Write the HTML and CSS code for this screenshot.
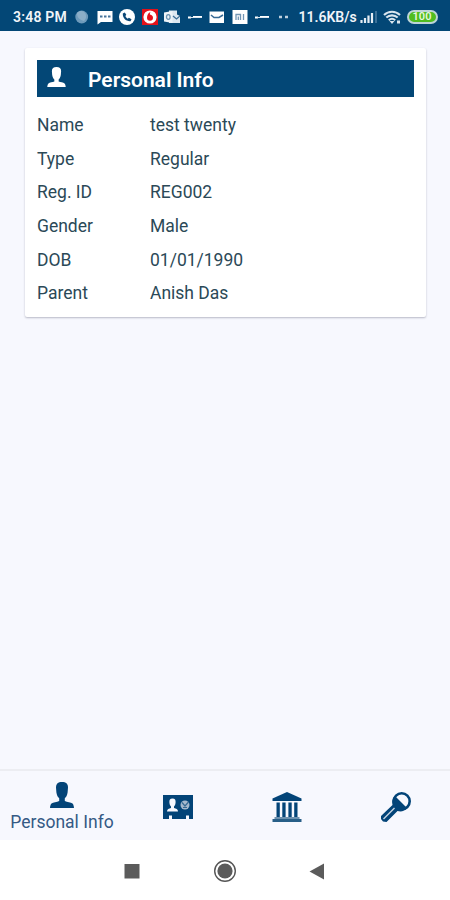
FILE: index.html
```html
<!DOCTYPE html>
<html lang="en">
<head>
  <meta charset="UTF-8">
  <title>Personal Info</title>
  <meta name="viewport" content="width=device-width, initial-scale=1.0">
  <link rel="stylesheet" href="styles.css">
</head>
<body>
  <svg width="0" height="0" class="defs">
    <symbol id="person" viewBox="0 0 24 26">
      <path d="M12 0C8 0 6 1.800 6 5.500l.4 5c.5 3.200 1.500 4.700 2.800 5.700v2.800C7 20.200 3 20 1.500 21.500.5 22.500.2 24 0 26h24c-.2-2-.5-3.500-1.500-4.500C21 20 17 20.200 14.800 19v-2.800c1.300-1 2.300-2.500 2.800-5.700l.4-5C18 1.800 16 0 12 0z"/>
    </symbol>
  </svg>

  <div class="status">
    <span class="time">3:48 PM</span>
    <div class="notifications">
      <svg viewBox="0 0 16 16"><circle cx="7.700" cy="8" r="6.400" fill="#6d9abb"/><path d="M3 4c3-3 7-2 8 0 2 3 1 6-1 8-4-1-7-3-7-8z" fill="#8baec8"/></svg>
      <svg viewBox="0 0 16 16"><path d="M.5 2h15v11H4L.5 15.500z" fill="#fff"/><path d="M3 7.500h2.500M7 7.500h2.500M11 7.500h2.500" stroke="#46749b" stroke-width="2"/></svg>
      <svg viewBox="0 0 16 16"><circle cx="8" cy="8" r="8" fill="#fff"/><path d="M5.800 3.500 3.800 4.500C3.500 9 7 12.500 11.500 12.200l1-2-2.600-1.500-1.200 1C7.500 9 6.800 8 6.400 7l.9-1.200z" fill="#0b4776"/></svg>
      <svg viewBox="0 0 16 16"><path d="M0 0h16v16H0z" fill="#e3121b"/><circle cx="8" cy="8" r="6.600" fill="#fff"/><path d="M9.500 2.500C8 3.200 7.800 4 7.900 5.500 10 5.800 11 7.200 11 8.700a3 3 0 0 1-6 0C5 6 6.500 3.200 9.500 2.500z" fill="#e3121b"/></svg>
      <svg viewBox="0 0 16 16"><path d="M5 1.500h8v4l3 1.500v7H5z" fill="#dce7f0"/><path d="M0 3.500l8.500-1.500v12L0 12.500z" fill="#eef4f8"/><path d="M9 7l3.500 3L16 7" fill="none" stroke="#3d7098" stroke-width="1.300"/><ellipse cx="4.300" cy="8" rx="1.800" ry="2.400" fill="none" stroke="#6b93b2" stroke-width="1.300"/></svg>
      <svg viewBox="0 0 16 16"><path d="M1 8.500h3M6 8h9" stroke="#fff" stroke-width="2"/><path d="M3 8.500h12" stroke="#dce7f0"/></svg>
      <svg viewBox="0 0 16 16"><path d="M.5 2.500h14.500v11.500H.5z" fill="#fff"/><path d="M2 6l3 2.500h5L14 6" fill="none" stroke="#376b96" stroke-width="1.500"/></svg>
      <svg viewBox="0 0 16 16"><path d="M.5 1h15v14H.5z" fill="#fff"/><path d="M4 11V5.500h4.500V11M6.300 7.500V11M11.500 5v6" fill="none" stroke="#7295b4" stroke-width="1.300"/></svg>
      <svg viewBox="0 0 16 16"><path d="M1 8.500h3M6 8h9" stroke="#fff" stroke-width="2"/><path d="M3 8.500h12" stroke="#dce7f0"/></svg>
      <svg viewBox="0 0 16 16"><path d="M2 8h3M8 8h3" stroke="#bed0de" stroke-width="2.500"/></svg>
    </div>
    <span class="speed">11.6KB/s</span>
    <svg class="signal" viewBox="0 0 18 14"><path d="M1.500 10v3M5 8v5M8.500 5.500V13M12 3v10" stroke="#e5edf4" stroke-width="2.200"/><path d="M16 1v12" stroke="#4f7fa4" stroke-width="1.500"/></svg>
    <svg class="wifi" viewBox="0 0 18 14"><path d="M1 5c4.500-4.300 11.500-4.300 16 0M3.300 7.600c3.200-3 8.200-3 11.400 0M5.800 10.200c2-1.800 4.400-1.800 6.400 0" fill="none" stroke="#d9e5ee" stroke-width="2.100"/><path d="M6.500 11h5L9 14zM14 10.500h3v3h-3z" fill="#d9e5ee"/></svg>
    <span class="battery">100</span>
  </div>

  <main class="content">
    <div class="card">
      <h1 class="card-title">
        <svg class="title-icon"><use href="#person"/></svg>
        Personal Info
      </h1>
      <dl class="info">
        <dt>Name</dt><dd>test twenty</dd>
        <dt>Type</dt><dd>Regular</dd>
        <dt>Reg. ID</dt><dd>REG002</dd>
        <dt>Gender</dt><dd>Male</dd>
        <dt>DOB</dt><dd>01/01/1990</dd>
        <dt>Parent</dt><dd>Anish Das</dd>
      </dl>
    </div>
  </main>

  <nav class="tabs">
    <div class="tab active">
      <svg class="tab-person"><use href="#person"/></svg>
      <span>Personal Info</span>
    </div>
    <div class="tab">
      <svg width="30" height="24" viewBox="0 0 30 24">
        <path d="M0 0h30v24h-4v-3.500h-3V24H9v-3.500H6V24H0z"/>
        <path d="M9.500 3.500c-2.500 0-3.300 1.500-3.100 4 .1 2 .8 3.300 1.600 4v1.500c-2 .6-4 1-4 3.500h11c0-2.500-2-2.900-4-3.500v-1.500c.8-.7 1.500-2 1.600-4 .2-2.500-.6-4-3.100-4z" fill="#f7f8fe"/>
        <circle cx="22" cy="10" r="4.500" fill="#a6b8cc"/>
        <path d="M19 7.500l3 3.500 3.500-4M20 12.500h4" fill="none" stroke="#396b94" stroke-width="1.200"/>
      </svg>
    </div>
    <div class="tab">
      <svg width="30" height="30" viewBox="0 0 30 30">
        <path d="M15 0 29.500 6.500V9H.5V6.500z"/>
        <path d="M4.500 10.500h3.300V25H4.500zM10.300 10.500h3.300V25h-3.300zM16.400 10.500h3.300V25h-3.300zM22.200 10.500h3.300V25h-3.300z"/>
        <path d="M2.500 25h25v2h-25z" fill="#6d91af"/>
        <path d="M.5 27h29v3H.5z" fill="#285f88"/>
      </svg>
    </div>
    <div class="tab">
      <svg width="30" height="30" viewBox="0 0 30 30">
        <circle cx="20.700" cy="9.300" r="8" fill="#f7f8fe" stroke="#034478" stroke-width="2.600"/>
        <path d="M14 4 26 16A9 9 0 0 1 16.500 19L5.500 30 2 29.500 0 27v-3L11.500 13A9 9 0 0 1 14 4z"/>
        <path d="M2.500 27 13.500 16" stroke="#c7d4e2" stroke-width="1.500"/>
      </svg>
    </div>
  </nav>

  <div class="system-nav">
    <svg viewBox="0 0 24 24"><path d="M4.500 5h15v14.500h-15z"/></svg>
    <svg viewBox="0 0 24 24"><circle cx="12" cy="12" r="10.300" fill="none" stroke="#555" stroke-width="1.400"/><circle cx="12" cy="12" r="7.600"/></svg>
    <svg viewBox="0 0 24 24"><path d="M3.500 12.500 18 4.500v16z"/></svg>
  </div>
</body>
</html>
```
FILE: styles.css
```css
* {
  box-sizing: border-box;
}

body {
  margin: 0;
  height: 900px;
  display: flex;
  flex-direction: column;
  background: #f7f8fe;
  color: #2b4957;
  font-family: Roboto, sans-serif;
}

.defs {
  display: none;
}

.status {
  height: 31px;
  display: flex;
  align-items: center;
  padding: 2px 11px 0 13px;
  background: #034776;
  color: #f1f5f9;
  font-size: 14px;
  font-weight: 600;
  white-space: nowrap;
}

.time {
  width: 61px;
  letter-spacing: 0.2px;
}

.notifications {
  display: flex;
  gap: 6.5px;
}

.notifications svg {
  width: 16px;
  height: 16px;
}

.speed {
  width: 61px;
  margin-left: 6px;
}

.signal {
  width: 18px;
  height: 14px;
}

.wifi {
  width: 18px;
  height: 14px;
  margin-left: 5px;
}

.battery {
  width: 31px;
  height: 14px;
  margin-left: 6px;
  border: 2px solid #bdd4d7;
  border-radius: 7px;
  background: #50bd20;
  color: #e5f7dd;
  font-size: 11px;
  line-height: 10px;
  text-align: center;
}

.content {
  flex: 1;
  padding: 17px 24px 0 25px;
}

.card {
  height: 269px;
  padding: 12px;
  background: #fff;
  border-radius: 2px;
  box-shadow: 0 1px 2px rgba(40, 40, 70, 0.3);
}

.card-title {
  display: flex;
  align-items: center;
  height: 37px;
  margin: 0;
  padding: 2px 0 0 10px;
  background: #034776;
  color: #fff;
  font-size: 21px;
  font-weight: 600;
}

.title-icon {
  width: 19px;
  height: 20px;
  margin: -6px 22px 0 0;
  fill: #fff;
}

.info {
  display: grid;
  grid-template-columns: 113px 1fr;
  grid-auto-rows: 33.7px;
  align-items: center;
  margin: 11px 0 0;
  font-size: 17.5px;
}

.info dd {
  margin: 0;
}

.tabs {
  height: 71px;
  display: flex;
  border-top: 2px solid #ecedf2;
  color: #355a85;
}

.tab {
  flex: 1;
  display: flex;
  flex-direction: column;
  align-items: center;
  justify-content: center;
  padding-top: 2px;
  fill: #034478;
}

.active {
  flex: 0 0 124px;
  font-size: 17.5px;
}

.tab-person {
  width: 24px;
  height: 26px;
  margin-bottom: 4px;
}

.system-nav {
  height: 60px;
  display: flex;
  align-items: center;
  justify-content: center;
  gap: 69px;
  padding-top: 1px;
  background: #fff;
}

.system-nav svg {
  width: 24px;
  height: 24px;
  fill: #5b5b5b;
}
```
